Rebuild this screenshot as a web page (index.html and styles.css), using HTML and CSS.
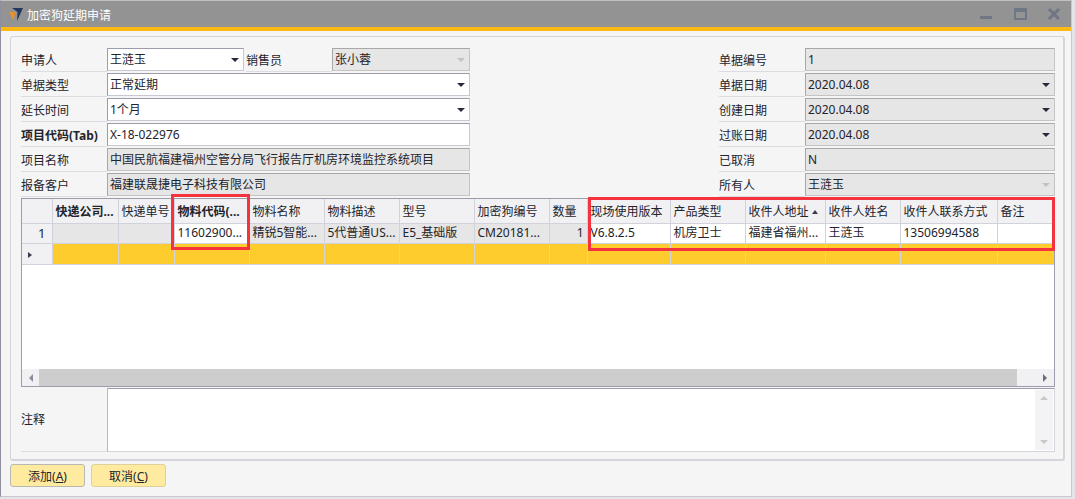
FILE: index.html
```html
<!DOCTYPE html>
<html lang="zh-CN">
<head>
    <meta charset="UTF-8">
    <title>加密狗延期申请</title>
    <link rel="stylesheet" href="styles.css">
</head>
<body>
    <div class="window">
        <div class="titlebar">
            <svg class="logo" width="16" height="16" viewBox="0 0 16 16">
                <path d="M0 6 L7 6 L4 14 Z" fill="#e8902a"/>
                <path d="M3 2 L14 2 L8 15 L8.5 6 Z" fill="#24385f"/>
            </svg>
            <span class="title">加密狗延期申请</span>
            <div class="win-buttons">
                <svg width="14" height="14" viewBox="0 0 14 14"><rect x="1" y="9" width="12" height="3" fill="#6f7785"/></svg>
                <svg width="14" height="14" viewBox="0 0 14 14"><rect x="2" y="2" width="11" height="10" fill="none" stroke="#6f7785" stroke-width="2"/><rect x="2" y="2" width="11" height="3" fill="#6f7785"/></svg>
                <svg width="14" height="14" viewBox="0 0 14 14"><path d="M2 2 L12 12 M12 2 L2 12" stroke="#6f7785" stroke-width="3"/></svg>
            </div>
        </div>
        <div class="accent"></div>

        <div class="panel">
            <div class="form">
                <div class="col col-left">
                    <div class="row">
                        <label>申请人</label>
                        <div class="field combo short">王涟玉</div>
                        <label class="inner-label">销售员</label>
                        <div class="field combo off muted-arrow short2">张小蓉</div>
                    </div>
                    <div class="row"><label>单据类型</label><div class="field combo">正常延期</div></div>
                    <div class="row"><label>延长时间</label><div class="field combo">1个月</div></div>
                    <div class="row"><label class="strong">项目代码(Tab)</label><div class="field">X-18-022976</div></div>
                    <div class="row"><label>项目名称</label><div class="field off">中国民航福建福州空管分局飞行报告厅机房环境监控系统项目</div></div>
                    <div class="row"><label>报备客户</label><div class="field off">福建联晟捷电子科技有限公司</div></div>
                </div>
                <div class="col col-right">
                    <div class="row"><label>单据编号</label><div class="field off">1</div></div>
                    <div class="row"><label>单据日期</label><div class="field combo off">2020.04.08</div></div>
                    <div class="row"><label>创建日期</label><div class="field combo off">2020.04.08</div></div>
                    <div class="row"><label>过账日期</label><div class="field combo off">2020.04.08</div></div>
                    <div class="row"><label>已取消</label><div class="field off">N</div></div>
                    <div class="row"><label>所有人</label><div class="field combo off muted-arrow">王涟玉</div></div>
                </div>
            </div>

            <div class="grid">
                <table>
                    <colgroup>
                        <col class="c-head"><col class="c-a"><col class="c-b"><col class="c-m"><col class="c-m"><col class="c-m">
                        <col class="c-m"><col class="c-m"><col class="c-q"><col class="c-v"><col class="c-m">
                        <col class="c-addr"><col class="c-m"><col class="c-tel"><col>
                    </colgroup>
                    <thead>
                        <tr>
                            <th></th>
                            <th class="strong">快递公司...</th>
                            <th>快递单号</th>
                            <th class="strong">物料代码(...</th>
                            <th>物料名称</th>
                            <th>物料描述</th>
                            <th>型号</th>
                            <th>加密狗编号</th>
                            <th>数量</th>
                            <th>现场使用版本</th>
                            <th>产品类型</th>
                            <th>收件人地址 <span class="sort"></span></th>
                            <th>收件人姓名</th>
                            <th>收件人联系方式</th>
                            <th>备注</th>
                        </tr>
                    </thead>
                    <tbody>
                        <tr class="data">
                            <td class="rownum">1</td>
                            <td class="off"></td>
                            <td class="off"></td>
                            <td>11602900...</td>
                            <td class="off">精锐5智能...</td>
                            <td class="off">5代普通US...</td>
                            <td class="off">E5_基础版</td>
                            <td class="off">CM20181...</td>
                            <td class="off num">1</td>
                            <td>V6.8.2.5</td>
                            <td>机房卫士</td>
                            <td>福建省福州...</td>
                            <td>王涟玉</td>
                            <td>13506994588</td>
                            <td></td>
                        </tr>
                        <tr class="newrow">
                            <td class="rownum"><span class="pointer"></span></td>
                            <td></td><td></td><td></td><td></td><td></td><td></td><td></td>
                            <td></td><td></td><td></td><td></td><td></td><td></td><td></td>
                        </tr>
                    </tbody>
                </table>
                <div class="grid-space"></div>
                <div class="hscroll">
                    <div class="scroll-btn"><span class="arrow-left"></span></div>
                    <div class="scroll-thumb"></div>
                    <div class="scroll-end"><span class="arrow-right"></span></div>
                </div>
                <div class="mark mark-a"></div>
                <div class="mark mark-b"></div>
            </div>

            <div class="note">
                <label>注释</label>
                <div class="note-box">
                    <div class="vscroll">
                        <span class="arrow-up"></span>
                        <span class="arrow-down"></span>
                    </div>
                </div>
            </div>
        </div>

        <div class="footer">
            <button><span>添加(<u>A</u>)</span></button>
            <button class="second"><span>取消(<u>C</u>)</span></button>
        </div>
    </div>
</body>
</html>
```

FILE: styles.css
```css
* {
    box-sizing: border-box;
}
html, body {
    margin: 0;
    height: 100%;
    overflow: hidden;
}
body {
    background-color: #e4e4ea;
    font-family: "Noto Sans", "Noto Sans CJK SC", sans-serif;
    font-size: 12px;
    color: #23232b;
}
.window {
    width: 1072px;
    height: 497px;
    background-color: #f5f5f6;
    border-left: 1px solid #8e8e9e;
    border-right: 1px solid #c8c8d0;
    border-bottom: 1px solid #c8c8d0;
    border-top: 1px solid #c0c0c0;
    display: flex;
    flex-direction: column;
}
.titlebar {
    height: 26px;
    flex: none;
    background-color: #939393;
    display: flex;
    align-items: center;
    padding-left: 8px;
}
.logo {
    margin-right: 2px;
}
.title {
    color: #fff;
    font-size: 12px;
    padding-top: 1px;
}
.win-buttons {
    margin-left: auto;
    margin-right: 10px;
    display: flex;
    gap: 20px;
}
.accent {
    height: 4px;
    flex: none;
    background-color: #fdb813;
}
.panel {
    margin: 5px 6px 0 9px;
    height: 425px;
    flex: none;
    background-color: #f5f5f6;
    border: 1px solid #d4d4dc;
    border-right-width: 2px;
    border-bottom-width: 2px;
    border-radius: 3px;
    padding: 11px 8px 0 10px;
}
.form {
    display: flex;
    justify-content: space-between;
    height: 150px;
}
.col-left {
    width: 449px;
}
.col-right {
    width: 336px;
}
.row {
    display: flex;
    height: 25px;
    padding-bottom: 2px;
}
label {
    width: 86px;
    flex: none;
    line-height: 25px;
    border-bottom: 1px solid #dcdce2;
    white-space: nowrap;
    margin-bottom: -1px;
}
.strong {
    font-weight: bold;
}
.inner-label {
    width: 86px;
    margin-left: 2px;
}
.field {
    flex: 1;
    height: 23px;
    line-height: 22px;
    padding-left: 2px;
    background-color: #fff;
    border: 1px solid #c8c8d0;
    border-left-color: #9c9cac;
    border-top-color: #9c9cac;
    position: relative;
    white-space: nowrap;
}
.field.short {
    flex: none;
    width: 137px;
}
.field.short2 {
    flex: none;
    width: 138px;
}
.field.off {
    background-color: #e6e6e6;
    border-color: #c4c4c4;
    border-left-color: #a8a8a8;
    border-top-color: #a8a8a8;
}
.combo::after {
    content: "";
    position: absolute;
    right: 4px;
    top: 9px;
    border-style: solid;
    border-width: 4px 4px 0 4px;
    border-color: #2a2a3c transparent transparent transparent;
}
.muted-arrow::after {
    border-top-color: #c2c2c2;
}

/* matrix */
.grid {
    position: relative;
    height: 189px;
    background-color: #fff;
    border: 1px solid #9c9cac;
    display: flex;
    flex-direction: column;
}
table {
    border-collapse: collapse;
    table-layout: fixed;
    width: 100%;
}
.c-head { width: 30px; }
.c-a { width: 66px; }
.c-b { width: 56px; }
.c-m { width: 75px; }
.c-q { width: 38px; }
.c-v { width: 83px; }
.c-addr { width: 80px; }
.c-tel { width: 97px; }
th, td {
    border: 1px solid #d2d2dc;
    padding: 0 3px;
    font-weight: normal;
    text-align: left;
    white-space: nowrap;
    overflow: hidden;
}
th:first-child, td:first-child {
    border-left: none;
}
th:last-child, td:last-child {
    border-right: none;
}
th {
    height: 24px;
    background-color: #f1f1f3;
    border-top: none;
}
th.strong {
    font-weight: bold;
}
.data td {
    height: 20px;
    line-height: 16px;
    background-color: #fff;
}
.data td.off {
    background-color: #e6e6e6;
}
.data td.num {
    text-align: right;
}
td.rownum {
    background-color: #f1f1f3;
    text-align: right;
    padding-right: 6px;
}
.data td.rownum {
    font-size: 13px;
}
.newrow td {
    height: 21px;
    line-height: 16px;
    background-color: #ffcc2e;
}
.newrow td.rownum {
    background-color: #f1f1f3;
    text-align: left;
}
.pointer {
    display: inline-block;
    margin-left: 3px;
    border-style: solid;
    border-width: 3px 0 3px 4px;
    border-color: transparent transparent transparent #3a3a4a;
}
.sort {
    display: inline-block;
    vertical-align: 2px;
    border-style: solid;
    border-width: 0 3px 4px 3px;
    border-color: transparent transparent #3a3a4a transparent;
}
.grid-space {
    flex: 1;
}
.hscroll {
    height: 17px;
    flex: none;
    display: flex;
    background-color: #f1f1f3;
}
.scroll-btn {
    width: 17px;
    display: flex;
    align-items: center;
    justify-content: center;
}
.scroll-thumb {
    flex: 1;
    background-color: #cdcdcd;
}
.scroll-end {
    width: 37px;
    display: flex;
    align-items: center;
    justify-content: flex-end;
    padding-right: 7px;
}
.arrow-left {
    border-style: solid;
    border-width: 4px 4px 4px 0;
    border-color: transparent #8c8c9c transparent transparent;
}
.arrow-right {
    border-style: solid;
    border-width: 4px 0 4px 4px;
    border-color: transparent transparent transparent #6c6c7c;
}

/* red marks drawn on the screenshot */
.mark {
    position: absolute;
    border: 3px solid #f5333f;
    pointer-events: none;
}
.mark-a {
    left: 149px;
    top: -5px;
    width: 79px;
    height: 56px;
}
.mark-b {
    left: 566px;
    top: -2px;
    width: 467px;
    height: 54px;
}

.note {
    display: flex;
    height: 64px;
    margin-top: 1px;
}
.note label {
    line-height: 64px;
    height: 64px;
    margin: 0;
}
.note-box {
    flex: 1;
    background-color: #fff;
    border: 1px solid #d4d4dc;
    border-left-color: #b8b8c4;
    border-top-color: #9c9cac;
    display: flex;
    justify-content: flex-end;
    padding: 1px 1px 1px 0;
}
.vscroll {
    width: 18px;
    background-color: #f3f3f5;
    display: flex;
    flex-direction: column;
    justify-content: space-between;
    align-items: center;
    padding: 6px 0;
}
.arrow-up {
    border-style: solid;
    border-width: 0 4px 4px 4px;
    border-color: transparent transparent #c8c8c8 transparent;
}
.arrow-down {
    border-style: solid;
    border-width: 4px 4px 0 4px;
    border-color: #c8c8c8 transparent transparent transparent;
}

.footer {
    display: flex;
    gap: 6px;
    padding: 3px 0 0 9px;
}
button {
    width: 75px;
    height: 23px;
    padding: 0;
    font: inherit;
    color: inherit;
    background-color: #ffeb9f;
    border: 1px solid #ddd29a;
    border-radius: 3px;
}
button:first-child {
    border-color: #b8b8b0;
}
```
